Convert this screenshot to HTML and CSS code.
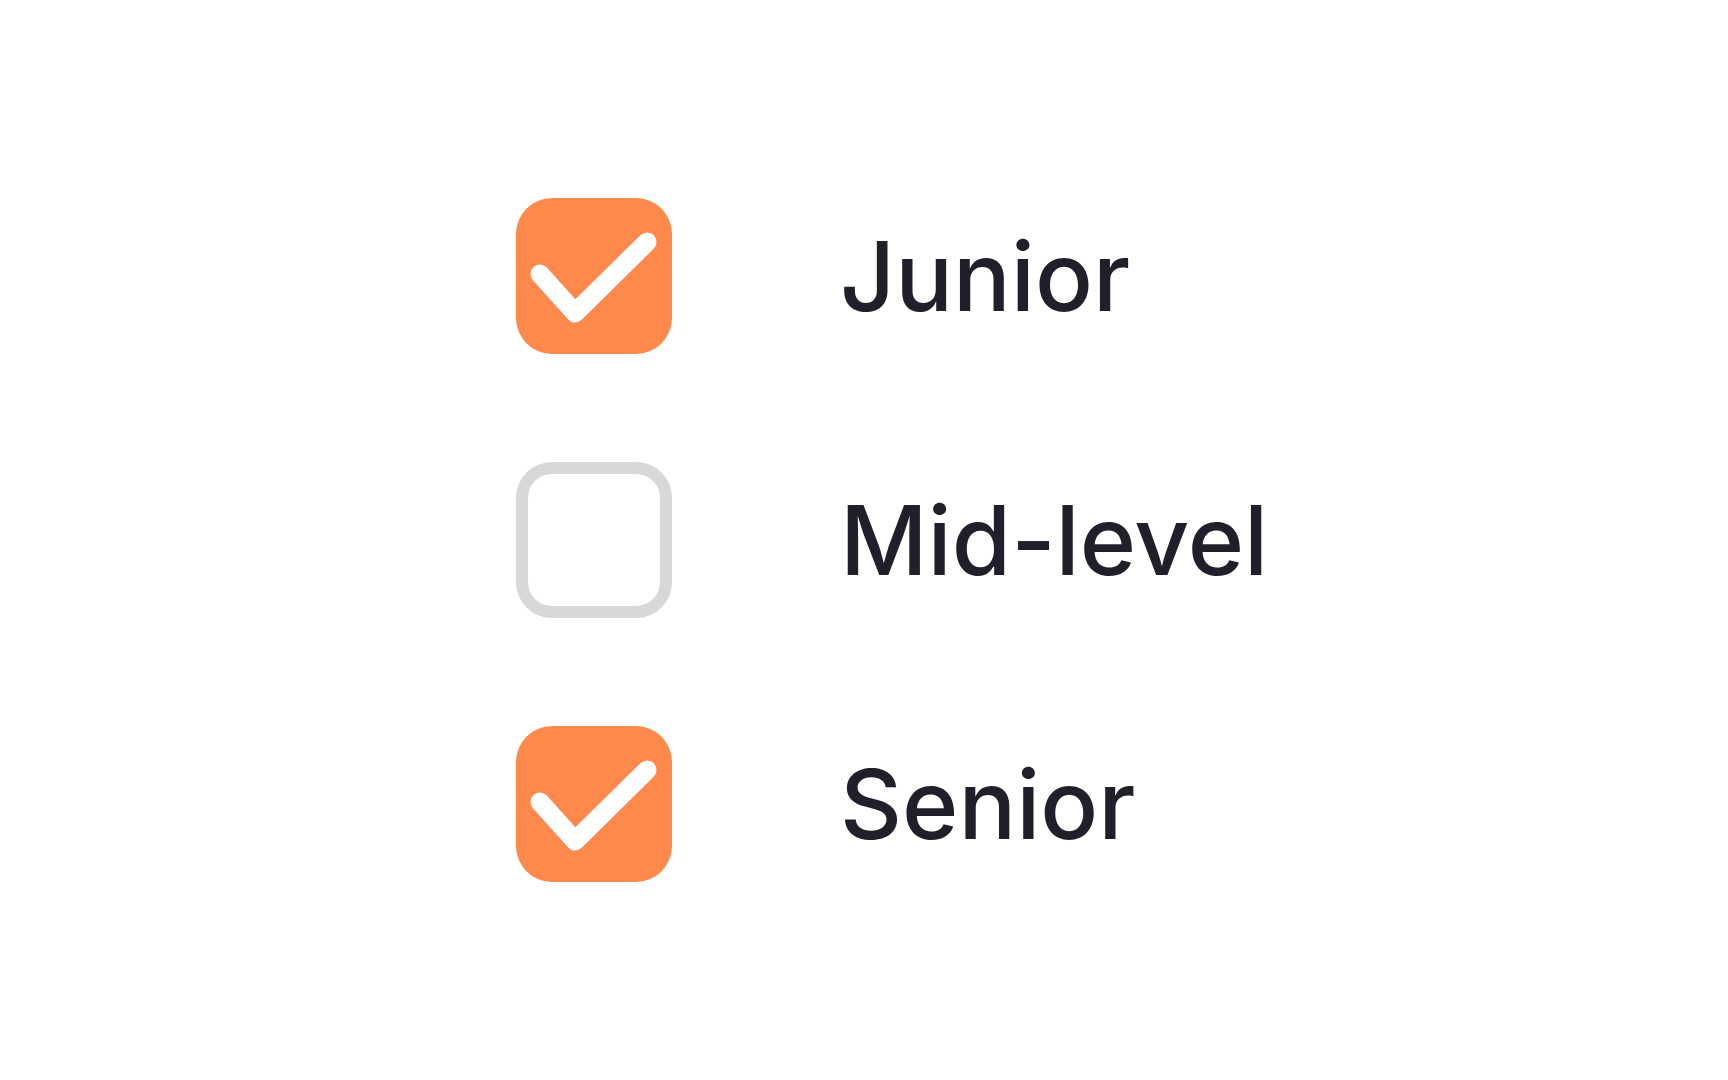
FILE: index.html
```html
<!DOCTYPE html>
<html lang="en">
<head>
<meta charset="utf-8">
<title>Experience level</title>
<link rel="stylesheet" href="styles.css">
</head>
<body>
<main class="page">
  <ul class="options">
    <li class="option">
      <span class="box box-checked">
        <svg class="check" viewBox="0 0 156 156" aria-hidden="true"><path d="M24 76 L59 115 L131 44" /></svg>
      </span>
      <span class="label">Junior</span>
    </li>
    <li class="option">
      <span class="box box-empty"></span>
      <span class="label">Mid-level</span>
    </li>
    <li class="option">
      <span class="box box-checked">
        <svg class="check" viewBox="0 0 156 156" aria-hidden="true"><path d="M24 76 L59 115 L131 44" /></svg>
      </span>
      <span class="label">Senior</span>
    </li>
  </ul>
</main>
</body>
</html>
```

FILE: styles.css
```css
html, body {
  margin: 0;
  padding: 0;
  background: #ffffff;
}

.page {
  height: 1080px;
  display: flex;
  flex-direction: column;
  justify-content: center;
  padding-left: 516px;
  box-sizing: border-box;
}

.options {
  list-style: none;
  margin: 0;
  padding: 0;
  display: flex;
  flex-direction: column;
  gap: 108px;
}

.option {
  display: flex;
  align-items: center;
  gap: 168px;
}

.box {
  width: 156px;
  height: 156px;
  border-radius: 36px;
  box-sizing: border-box;
  flex: none;
  display: block;
}

.box-checked {
  background: #ff884d;
}

.box-empty {
  border: 12px solid #d8d8da;
  background: #ffffff;
}

.check {
  width: 156px;
  height: 156px;
  display: block;
}

.check path {
  fill: none;
  stroke: #ffffff;
  stroke-width: 19;
  stroke-linecap: round;
  stroke-linejoin: round;
}

.label {
  font-family: Inter, "Noto Sans", sans-serif;
  font-size: 96px;
  font-weight: 500;
  color: #1f2029;
  line-height: 1;
}
```
